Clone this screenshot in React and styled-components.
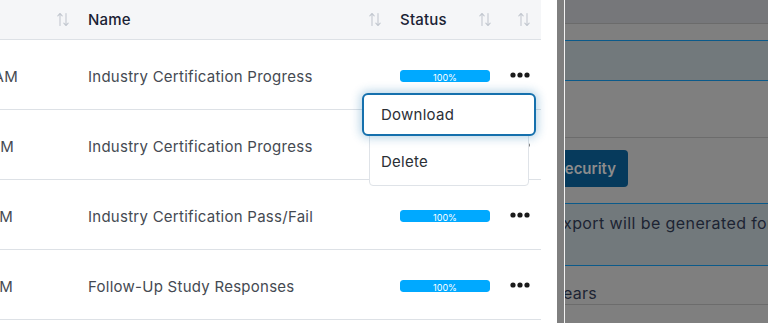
import React from "react";
import styled, { createGlobalStyle } from "styled-components";

const GlobalStyle = createGlobalStyle`
  html, body {
    margin: 0;
    padding: 0;
    background: #fff;
  }
  body {
    font-family: Inter, "Open Sans", sans-serif;
    overflow: hidden;
  }
`;

const rows = [
  { time: "10:42 AM", trim: 58, name: "Industry Certification Progress" },
  { time: "1:15 PM", trim: 62, name: "Industry Certification Progress" },
  { time: "3:08 PM", trim: 63, name: "Industry Certification Pass/Fail" },
  { time: "4:21 PM", trim: 63, name: "Follow-Up Study Responses" },
];

const SortIcon = () => (
  <svg width="12" height="15" viewBox="0 0 12 15" fill="none" stroke="#c3c8d0" strokeWidth="1.1" strokeLinecap="round" strokeLinejoin="round">
    <path d="M3 13.5V1.5M0.8 3.8L3 1.5l2.2 2.3" />
    <path d="M9 1.5v12M6.8 11.2L9 13.5l2.2-2.3" />
  </svg>
);

const Dots = () => (
  <svg width="20" height="6" viewBox="0 0 20 6" fill="#1a1a1a">
    <circle cx="3" cy="3" r="2.6" />
    <circle cx="10" cy="3" r="2.6" />
    <circle cx="17" cy="3" r="2.6" />
  </svg>
);

const App = () => {
  return (
    <>
      <GlobalStyle />
      <Page>
        <LeftPanel>
          <Table>
            <HeadRow>
              <HeadCell $first>
                <SortIcon />
              </HeadCell>
              <HeadCell>
                <span>Name</span>
                <SortIcon />
              </HeadCell>
              <HeadCell>
                <span>Status</span>
                <SortIcon />
              </HeadCell>
              <HeadCell $last>
                <SortIcon />
              </HeadCell>
            </HeadRow>
            {rows.map((r, i) => (
              <Row key={i}>
                <TimeCell $trim={r.trim}>{r.time}</TimeCell>
                <Cell>{r.name}</Cell>
                <Cell>
                  <Progress>
                    <ProgressFill style={{ width: "100%" }}>100%</ProgressFill>
                  </Progress>
                </Cell>
                <ActionCell>
                  <Dots />
                </ActionCell>
              </Row>
            ))}
          </Table>
          <Menu>
            <MenuItem $active>Download</MenuItem>
            <MenuItem>Delete</MenuItem>
          </Menu>
        </LeftPanel>

        <RightPanel>
          <Drawer>
            <Scroll>
              <TopBar />
              <Spacer $h={16} />
              <InfoBand $h={39} />
              <Spacer $h={56} />
              <Divider />
              <ButtonRow>
                <DarkButton>Security</DarkButton>
              </ButtonRow>
              <InfoBand $h={61}>
                <BandText>Export will be generated for</BandText>
              </InfoBand>
              <FieldRow>Years</FieldRow>
            </Scroll>
          </Drawer>
        </RightPanel>
      </Page>
    </>
  );
};

export default App;

const Page = styled.div`
  display: flex;
  width: 768px;
  height: 323px;
  overflow: hidden;
`;

const LeftPanel = styled.div`
  position: relative;
  width: 557px;
  flex: none;
  background: #fff;
`;

const Table = styled.div`
  width: 541px;
`;

const grid = `
  display: grid;
  grid-template-columns: 76px 312px 110px 43px;
`;

const HeadRow = styled.div`
  ${grid}
  height: 39px;
  background: #f5f6f8;
  border-bottom: 1px solid #dde1e6;
`;

const HeadCell = styled.div`
  display: flex;
  align-items: center;
  justify-content: ${(p) => (p.$first || p.$last ? "flex-end" : "space-between")};
  padding: ${(p) => (p.$last ? "0 11px 0 12px" : "0 7px 0 12px")};
  font-size: 15px;
  font-weight: 500;
  letter-spacing: 0.2px;
  color: #1a2234;
`;

const Row = styled.div`
  ${grid}
  height: 69px;
  border-bottom: 1px solid #dde1e6;
`;

const Cell = styled.div`
  display: flex;
  align-items: center;
  padding: 4px 7px 0 12px;
  font-size: 15px;
  letter-spacing: 0.26px;
  color: #454a52;
  white-space: nowrap;
`;

const TimeCell = styled(Cell)`
  justify-content: flex-end;
  overflow: hidden;
  padding-right: ${(p) => p.$trim}px;
`;

const ActionCell = styled(Cell)`
  align-items: flex-start;
  padding-top: 32px;
`;

const Progress = styled.div`
  width: 90px;
  height: 12px;
  border-radius: 3px;
  background: #e6f6ff;
  overflow: hidden;
  margin-top: -2px;
`;

const ProgressFill = styled.div`
  height: 100%;
  background: #00a9ff;
  border-radius: 3px;
  color: #fff;
  font-size: 9px;
  letter-spacing: 0;
  line-height: 15px;
  text-align: center;
`;

const Menu = styled.div`
  position: absolute;
  left: 369px;
  top: 93px;
  width: 158px;
  background: #fff;
  border: 1px solid #dfe3e8;
  border-radius: 4px;
  display: flex;
  flex-direction: column;
`;

const MenuItem = styled.div`
  font-size: 15px;
  letter-spacing: 0.26px;
  line-height: 20px;
  color: #2b2f36;
  padding: 14px 11px 13px;
  ${(p) =>
    p.$active &&
    `
    margin: -1px -8px 2px;
    padding: 10px 17px 9px;
    background: #fff;
    border: 2px solid #1570ad;
    border-radius: 6px;
    box-shadow: 0 0 10px 2px rgba(21, 112, 173, 0.3);
  `}
`;

const RightPanel = styled.div`
  flex: 1;
  background: #7f7f7f;
  padding-left: 7px;
  display: flex;
`;

const Drawer = styled.div`
  flex: 1;
  border-left: 1px solid #f2f2f2;
  overflow: hidden;
`;

const Scroll = styled.div`
  margin-left: -12px;
  width: 260px;
  display: flex;
  flex-direction: column;
`;

const TopBar = styled.div`
  height: 23px;
  background: #76777a;
  border-bottom: 1px solid #6b6b6b;
`;

const Spacer = styled.div`
  height: ${(p) => p.$h}px;
`;

const InfoBand = styled.div`
  height: ${(p) => p.$h}px;
  background: #72797c;
  border-top: 1px solid #0b5a8a;
  border-bottom: 1px solid #0b5a8a;
  box-sizing: content-box;
  display: flex;
  align-items: flex-start;
`;

const Divider = styled.div`
  height: 1px;
  background: #6c6c6c;
`;

const ButtonRow = styled.div`
  display: flex;
  padding: 12px 0 16px;
`;

const DarkButton = styled.div`
  margin-left: -10px;
  padding: 0 12px;
  height: 37px;
  display: flex;
  align-items: center;
  background: #063a5c;
  border-radius: 4px;
  color: #8c8c8c;
  font-size: 15px;
  font-weight: 600;
`;

const BandText = styled.div`
  font-size: 16px;
  letter-spacing: 0.4px;
  color: #1d2433;
  padding-top: 9px;
  white-space: nowrap;
`;

const FieldRow = styled.div`
  font-size: 16px;
  letter-spacing: 0.3px;
  color: #1d2433;
  height: 39px;
  line-height: 20px;
  padding-top: 17px;
  box-sizing: border-box;
  border-bottom: 1px solid #6c6c6c;
`;
